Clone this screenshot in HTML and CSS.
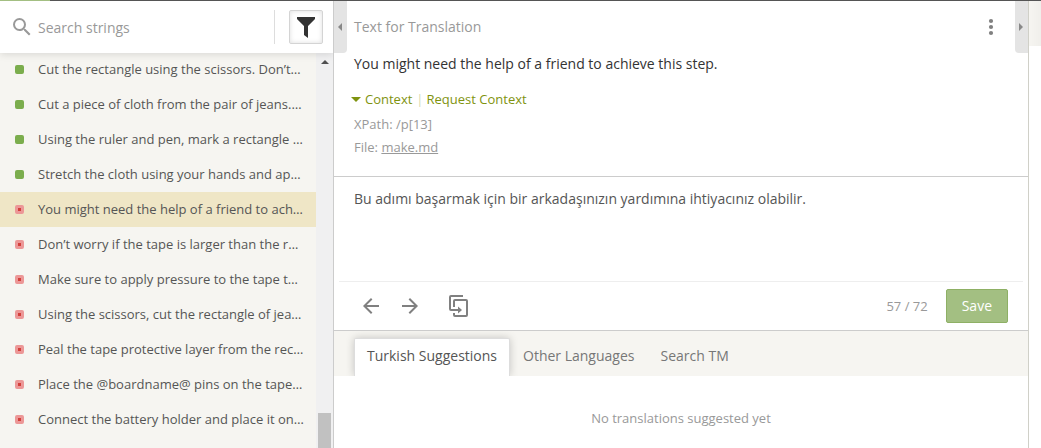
FILE: index.html
```html
<!DOCTYPE html>
<html lang="en">
<head>
	<meta charset="utf-8">
	<title>Translation Editor</title>
	<meta name="viewport" content="width=device-width, initial-scale=1">
	<link rel="stylesheet" href="styles.css">
</head>
<body>
	<div class="progress"><div class="progress-done"></div></div>

	<div class="editor">
		<aside class="sidebar">
			<form class="search">
				<label for="search">
					<svg class="icon" viewBox="0 0 24 24"><path d="M15.5 14h-.79l-.28-.27A6.47 6.47 0 0 0 16 9.5 6.5 6.5 0 1 0 9.5 16c1.61 0 3.09-.59 4.23-1.57l.27.28v.79l5 4.99L20.49 19l-4.99-5zm-6 0C7.01 14 5 11.99 5 9.5S7.01 5 9.5 5 14 7.01 14 9.5 11.99 14 9.5 14z"/></svg>
				</label>
				<input id="search" type="text" placeholder="Search strings">
				<button class="filter" type="button" aria-label="Filter">
					<svg viewBox="0 0 18 21"><path d="M0 0h18v2l-7 7v12l-4-3V9L0 2z"/></svg>
				</button>
			</form>
			<div class="strings">
				<ul class="list">
					<li class="done">Cut the rectangle using the scissors. Don’t…</li>
					<li class="done">Cut a piece of cloth from the pair of jeans.…</li>
					<li class="done">Using the ruler and pen, mark a rectangle …</li>
					<li class="done">Stretch the cloth using your hands and ap…</li>
					<li class="active">You might need the help of a friend to ach…</li>
					<li>Don’t worry if the tape is larger than the r…</li>
					<li>Make sure to apply pressure to the tape t…</li>
					<li>Using the scissors, cut the rectangle of jea…</li>
					<li>Peal the tape protective layer from the rec…</li>
					<li>Place the @boardname@ pins on the tape…</li>
					<li>Connect the battery holder and place it on…</li>
				</ul>
				<div class="scrollbar">
					<div class="scroll-up"></div>
					<div class="thumb"></div>
				</div>
			</div>
		</aside>

		<main class="main">
			<button class="handle left" aria-label="Collapse strings"><svg viewBox="0 0 5 8"><path d="M4 0v8L0 4z"/></svg></button>
			<button class="handle right" aria-label="Collapse comments"><svg viewBox="0 0 5 8"><path d="M0 0v8l4-4z"/></svg></button>

			<section class="source">
				<header>
					<h1>Text for Translation</h1>
					<button class="tool" aria-label="More"><svg class="icon" viewBox="0 0 24 24"><circle cx="12" cy="6" r="2.1"/><circle cx="12" cy="12" r="2.1"/><circle cx="12" cy="18" r="2.1"/></svg></button>
				</header>
				<p class="text">You might need the help of a friend to achieve this step.</p>
				<div class="context">
					<a class="toggle" href="#">Context</a>
					<a class="request" href="#">Request Context</a>
				</div>
				<div class="meta">XPath: /p[13]</div>
				<div class="meta">File: <a href="#">make.md</a></div>
			</section>

			<section class="translation">
				<textarea aria-label="Translation" spellcheck="false">Bu adımı başarmak için bir arkadaşınızın yardımına ihtiyacınız olabilir.</textarea>
				<div class="toolbar">
					<button class="tool" aria-label="Previous"><svg class="icon" viewBox="0 0 24 24"><path d="M20 11H7.83l5.59-5.59L12 4l-8 8 8 8 1.41-1.41L7.83 13H20z"/></svg></button>
					<button class="tool" aria-label="Next"><svg class="icon" viewBox="0 0 24 24"><path d="M4 11h12.17l-5.59-5.59L12 4l8 8-8 8-1.41-1.41L16.17 13H4z"/></svg></button>
					<button class="tool copy" aria-label="Copy source"><svg class="icon" viewBox="0 0 24 24"><path class="line" d="M16 2H4Q3 2 3 3V15Q3 16 4 16H12M7 13V7Q7 6 8 6H19Q20 6 20 7V21Q20 22 19 22H8Q7 22 7 21V19"/><path d="M11 12.500 15 16l-4 3.500z"/></svg></button>
					<span class="count">57 / 72</span>
					<button class="save">Save</button>
				</div>
			</section>

			<nav class="tabs">
				<button class="tab on">Turkish Suggestions</button>
				<button class="tab">Other Languages</button>
				<button class="tab">Search TM</button>
			</nav>
			<p class="empty">No translations suggested yet</p>
		</main>

		<aside class="comments"><div class="comments-head"></div></aside>
	</div>
</body>
</html>
```
FILE: styles.css
```css
:root {
	--bg: #f6f5f1;
	--border: #ccc;
	--green: #a3bf82;
	--muted: #999;
	--dark: #555;
}

*,
*::before { box-sizing: border-box; }

body {
	display: flex;
	flex-direction: column;
	height: 100vh;
	margin: 0;
	overflow: hidden;
	background: #fff;
	color: var(--dark);
	font: 14px/22px "Open Sans", sans-serif;
}

button,
input,
textarea {
	margin: 0;
	padding: 0;
	border: 0;
	outline: 0;
	background: none;
	color: inherit;
	font: inherit;
}

h1, p, ul { margin: 0; padding: 0; font: inherit; list-style: none; }

.icon { display: block; width: 24px; height: 24px; fill: #808080; }
.icon .line { fill: none; stroke: #808080; stroke-width: 2; }

.progress { flex: none; height: 1px; background: #555; }
.progress-done { width: 50px; height: 1px; background: var(--green); }

.editor { display: flex; flex: 1; min-height: 0; }

/* strings */

.sidebar {
	display: flex;
	flex-direction: column;
	flex: 0 0 334px;
	border-right: 1px solid var(--border);
	background: var(--bg);
}

.search {
	position: relative;
	display: flex;
	align-items: center;
	flex: none;
	height: 52px;
	padding: 0 10px;
	background: #fff;
	box-shadow: 0 1px 8px #0002;
	clip-path: inset(0 0 -10px 0);
}

.search .icon { fill: #999; }

.search input {
	flex: 1;
	min-width: 0;
	height: 34px;
	margin-right: 14px;
	padding-left: 4px;
	border-right: 1px solid #ddd;
}

.search input::placeholder { color: var(--muted); opacity: 1; }

.filter {
	display: grid;
	place-items: center;
	width: 34px;
	height: 34px;
	border: 1px solid #d4d4d4;
	border-radius: 2px;
	box-shadow: inset 0 0 5px #0002;
}

.filter svg { width: 18px; height: 21px; fill: #333; }

.strings { display: flex; flex: 1; min-height: 0; margin-top: -1px; }

.list { flex: 1; min-width: 0; overflow: hidden; font-size: 13px; line-height: 21px; }

.list li {
	display: flex;
	align-items: center;
	gap: 14px;
	height: 35px;
	padding-left: 15px;
	white-space: pre;
}

.list li::before {
	content: "";
	width: 9px;
	height: 9px;
	border: 3px solid #ec9797;
	border-radius: 2px;
	background: #d2403b;
}

.list li.done::before { border-color: #7bad4d; background: #7bad4d; }
.list li.active { background: #efe6c6; }

.scrollbar {
	display: flex;
	flex-direction: column;
	justify-content: space-between;
	flex: 0 0 17px;
	padding: 8px 2px 0;
	background: #f0f0f1;
}

.scroll-up {
	width: 0;
	margin-left: 3px;
	border: 4px solid transparent;
	border-top-width: 0;
	border-bottom-color: #505050;
}

.thumb { height: 35px; background: #c1c1c1; }

/* translation */

.main {
	position: relative;
	display: flex;
	flex-direction: column;
	flex: 1;
	min-width: 0;
}

.handle {
	position: absolute;
	top: 0;
	display: grid;
	place-items: center;
	width: 13px;
	height: 52px;
	background: #e4e4e4;
}

.handle svg { width: 5px; height: 8px; fill: #888; }
.handle.left { left: 0; border-bottom-right-radius: 4px; }
.handle.right { right: 0; border-bottom-left-radius: 4px; }

.source {
	padding: 0 20px 17px;
	border-bottom: 1px solid var(--border);
}

.source header {
	display: flex;
	align-items: center;
	justify-content: space-between;
	height: 52px;
	padding-right: 5px;
	color: var(--muted);
}

.source .text { color: #333; }

.context,
.meta { font-size: 13px; line-height: 23px; }

.context { display: flex; margin: 13px 0 2px -3px; }
.context a { color: #7f930f; text-decoration: none; }

.toggle { display: flex; align-items: center; gap: 4px; }

.toggle::before {
	content: "";
	border: 5px solid transparent;
	border-top-color: #7f930f;
	border-bottom-width: 0;
}

.request::before { content: "|"; margin: 0 3px 0 4px; color: #d5dab0; }

.meta,
.meta a { color: var(--muted); }

textarea {
	display: block;
	width: 100%;
	height: 104px;
	padding: 11px 20px;
	resize: none;
}

.translation { border-bottom: 1px solid var(--border); }

.toolbar {
	display: flex;
	align-items: center;
	gap: 15px;
	height: 49px;
	margin: 0 5px;
	padding: 0 15px 0 20px;
	border-top: 1px solid #eee;
}

.copy { margin-left: 10px; }

.count { margin-left: auto; color: var(--muted); font-size: 13px; }

.save {
	height: 34px;
	margin-left: 3px;
	padding: 0 15px;
	border: 1px solid #8eb065;
	border-radius: 2px;
	background: var(--green);
	color: #fff;
}

.tabs {
	display: flex;
	flex: none;
	height: 45px;
	padding: 7px 20px 0;
	overflow: hidden;
	background: var(--bg);
}

.tab { padding: 0 13px 2px; color: #777; }

.tab.on {
	border: 1px solid #ddd;
	border-bottom: 0;
	border-radius: 2px 2px 0 0;
	padding: 0 12px 3px;
	background: #fff;
	box-shadow: 0 0 8px #0003;
	color: var(--dark);
}

.empty { padding: 31px 20px; color: var(--muted); font-size: 13px; text-align: center; }

.comments { flex: 0 0 13px; border-left: 1px solid #d0d0c8; }
.comments-head { height: 45px; background: linear-gradient(90deg, #f6f5f1, #f0efeb); }
```
